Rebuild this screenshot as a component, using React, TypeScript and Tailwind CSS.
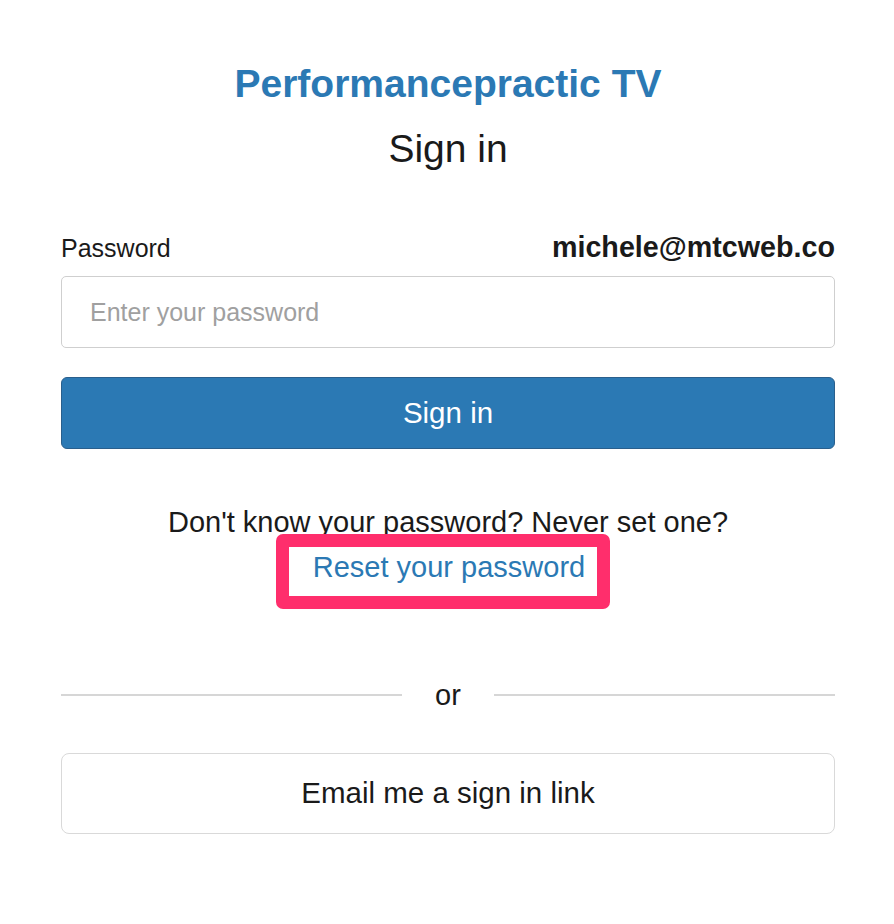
import React from "react";

export default function App() {
  return (
    <div className="min-h-[924px] w-full bg-white" style={{ fontFamily: '"Liberation Sans", Arial, sans-serif' }}>
      <div className="ml-[61px] flex w-[774px] flex-col pt-[62px]">
        <h1 className="text-center text-[39px] font-bold leading-[44px] text-[#2b79b4]">Performancepractic TV</h1>
        <h2 className="mt-[20px] text-center text-[39px] leading-[46px] text-[#1a1a1a]">Sign in</h2>
        <div className="mt-[60px] flex items-baseline justify-between">
          <span className="text-[25px] leading-[30px] text-[#1a1a1a]">Password</span>
          <span className="text-[28.7px] font-bold leading-[30px] text-[#1a1a1a]">michele@mtcweb.co</span>
        </div>
        <input
          type="password"
          placeholder="Enter your password"
          className="mt-[13px] h-[72px] w-full rounded-[5px] border border-[#cfcfcf] px-[28px] text-[25px] text-[#333] placeholder:text-[#a0a0a0] outline-none"
        />
        <button className="mt-[29px] h-[72px] w-full rounded-[6px] border border-[#2a5f8c] bg-[#2b79b4] text-[29.5px] text-white">
          Sign in
        </button>
        <p className="mt-[58px] text-center text-[29px] leading-[30px] text-[#1a1a1a]">Don't know your password? Never set one?</p>
        <div className="flex justify-center">
          <div className="-mt-[3px] mr-[10px] rounded-[7px] border-[13px] border-[#ff2e6c] pb-[12px] pl-[24px] pr-[12px] pt-[5px]">
            <a className="text-[29px] leading-[30px] text-[#2b79b4]">Reset your password</a>
          </div>
        </div>
        <div className="mt-[71px] flex items-center">
          <div className="h-[2px] flex-1 bg-[#d6d6d6]" />
          <span className="px-[33px] text-[29px] leading-[30px] text-[#1a1a1a]">or</span>
          <div className="h-[2px] flex-1 bg-[#d6d6d6]" />
        </div>
        <button className="mt-[43px] h-[81px] w-full rounded-[8px] border border-[#d9d9d9] bg-white text-[29.5px] text-[#1a1a1a]">
          Email me a sign in link
        </button>
      </div>
    </div>
  );
}
